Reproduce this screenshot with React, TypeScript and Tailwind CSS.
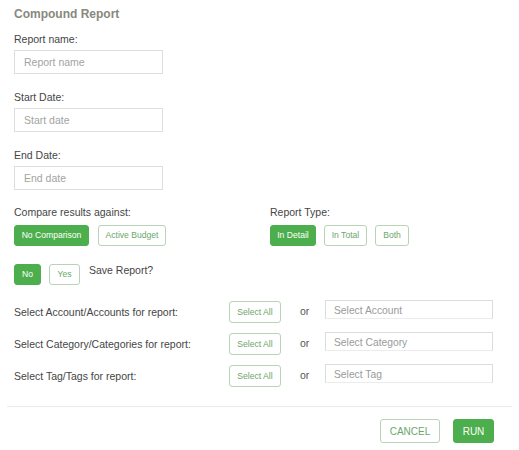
import React, { useState } from 'react';

const green = 'bg-[#4cae4c] border-[#4cae4c] text-white';
const outline = 'bg-white border-[#b9d3b9] text-[#6aa86a]';

const Toggle: React.FC<{ label: string; active: boolean; onClick: () => void; w: string }> = ({ label, active, onClick, w }) => (
  <button
    onClick={onClick}
    className={`h-[21px] ${w} rounded-[3px] border text-[8.6px] leading-none flex items-center justify-center ${active ? green : outline}`}
  >
    {label}
  </button>
);

const Field: React.FC<{ label: string; placeholder: string; className: string }> = ({ label, placeholder, className }) => (
  <div className={className}>
    <div className="text-[10.5px] leading-[14px] text-[#454545]">{label}</div>
    <input
      placeholder={placeholder}
      className="mt-[4px] block w-[149px] h-[24px] border border-[#dedede] px-[9px] text-[10.5px] text-[#444] placeholder:text-[#a3a3a3] outline-none"
    />
  </div>
);

const SelectRow: React.FC<{ label: string; placeholder: string }> = ({ label, placeholder }) => (
  <div className="flex items-start h-[22px]">
    <div className="w-[215px] text-[10.5px] leading-[14px] pt-[4px] text-[#454545]">{label}</div>
    <button className={`h-[22px] w-[52px] rounded-[3px] border text-[8.6px] ${outline}`}>Select All</button>
    <div className="w-[44px] pl-[19px] text-[10.5px] leading-[14px] pt-[3px] text-[#555]">or</div>
    <input
      placeholder={placeholder}
      className="-mt-[1px] w-[168px] h-[19px] border border-[#dcdcdc] border-b-[#ececec] px-[8px] pt-[2px] text-[10.3px] text-[#444] placeholder:text-[#9a9a9a] outline-none"
    />
  </div>
);

export default function App() {
  const [compare, setCompare] = useState('none');
  const [type, setType] = useState('detail');
  const [save, setSave] = useState(false);

  return (
    <div className="w-[519px] h-[450px] bg-white font-['Liberation_Sans',Arial,sans-serif]">
      <div className="px-[14px]">
        <h1 className="pt-[5px] text-[12px] leading-[18px] font-bold text-[#88887e]">Compound Report</h1>

        <Field label="Report name:" placeholder="Report name" className="mt-[9px]" />
        <Field label="Start Date:" placeholder="Start date" className="mt-[16px]" />
        <Field label="End Date:" placeholder="End date" className="mt-[16px]" />

        <div className="mt-[15px] flex">
          <div className="w-[256px]">
            <div className="text-[10.5px] leading-[14px] text-[#454545]">Compare results against:</div>
            <div className="mt-[6px] flex gap-[9px]">
              <Toggle label="No Comparison" w="w-[75px]" active={compare === 'none'} onClick={() => setCompare('none')} />
              <Toggle label="Active Budget" w="w-[68px]" active={compare === 'budget'} onClick={() => setCompare('budget')} />
            </div>
          </div>
          <div>
            <div className="text-[10.5px] leading-[14px] text-[#454545]">Report Type:</div>
            <div className="mt-[6px] flex gap-[8px]">
              <Toggle label="In Detail" w="w-[46px]" active={type === 'detail'} onClick={() => setType('detail')} />
              <Toggle label="In Total" w="w-[43px]" active={type === 'total'} onClick={() => setType('total')} />
              <Toggle label="Both" w="w-[34px]" active={type === 'both'} onClick={() => setType('both')} />
            </div>
          </div>
        </div>

        <div className="mt-[18px] flex items-start">
          <Toggle label="No" w="w-[27px]" active={!save} onClick={() => setSave(false)} />
          <div className="ml-[8px]">
            <Toggle label="Yes" w="w-[31px]" active={save} onClick={() => setSave(true)} />
          </div>
          <div className="ml-[9px] -mt-[1px] text-[10.5px] leading-[14px] text-[#454545]">Save Report?</div>
        </div>

        <div className="mt-[16px] flex flex-col gap-[10px]">
          <SelectRow label="Select Account/Accounts for report:" placeholder="Select Account" />
          <SelectRow label="Select Category/Categories for report:" placeholder="Select Category" />
          <SelectRow label="Select Tag/Tags for report:" placeholder="Select Tag" />
        </div>
      </div>

      <div className="mt-[19px] mx-[7px] border-t border-[#ececec]" />

      <div className="mt-[12px] pr-[25px] flex justify-end gap-[13px]">
        <button className={`h-[24px] w-[60px] rounded-[3px] border text-[10px] ${outline}`}>CANCEL</button>
        <button className={`h-[24px] w-[41px] rounded-[3px] border text-[10px] ${green}`}>RUN</button>
      </div>
    </div>
  );
}
